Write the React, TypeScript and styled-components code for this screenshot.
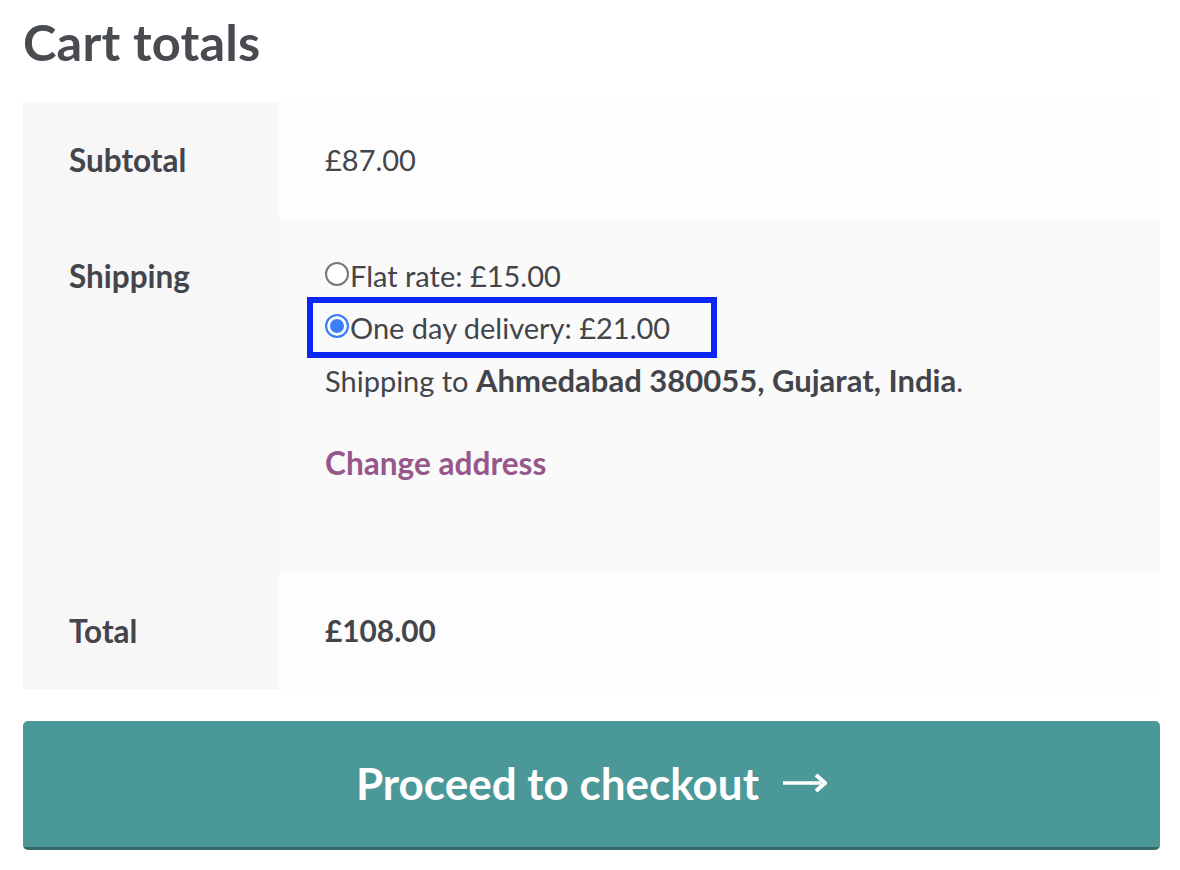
import React, { useState } from "react";
import styled, { createGlobalStyle } from "styled-components";

const Global = createGlobalStyle`
  html, body { margin: 0; padding: 0; background: #ffffff; }
  body {
    font-family: "Lato", "Source Sans Pro", "Noto Sans", sans-serif;
    color: #43454b;
    -webkit-font-smoothing: antialiased;
  }
  *, *::before, *::after { box-sizing: border-box; }
`;

const Page = styled.div`
  width: 1180px;
  padding: 0 20px 0 23px;
`;

const Heading = styled.h2`
  margin: 0;
  padding-top: 10px;
  height: 102px;
  font-size: 50.5px;
  line-height: 64px;
  font-weight: 700;
  color: #484b50;
  letter-spacing: 0.2px;
`;

const Table = styled.div`
  display: grid;
  grid-template-columns: 256px 1fr;
  width: 1137px;
`;

const Label = styled.div`
  background: #f7f7f7;
  padding: 32px 0 32px 46px;
  font-size: 31.5px;
  line-height: 52px;
  font-weight: 700;
  color: #43454b;
`;

const Value = styled.div<{ $alt?: boolean; $bold?: boolean }>`
  background: ${(p) => (p.$alt ? "#fafafa" : "#fdfdfd")};
  padding: 32px 46px;
  font-size: ${(p) => (p.$bold ? "29.8px" : "29px")};
  line-height: 52px;
  font-weight: ${(p) => (p.$bold ? 700 : 400)};
  color: #43454b;
`;

const Methods = styled.ul`
  list-style: none;
  margin: 0;
  padding: 0;
`;

const Method = styled.li<{ $highlight?: boolean }>`
  position: relative;
  display: flex;
  align-items: center;
  height: 52px;

  ${(p) =>
    p.$highlight &&
    `
    &::after {
      content: "";
      position: absolute;
      left: -18px;
      top: -5px;
      width: 410px;
      height: 61px;
      border: 6px solid #0a25f4;
      pointer-events: none;
    }
  `}
`;

const Radio = styled.input.attrs({ type: "radio" })`
  appearance: none;
  -webkit-appearance: none;
  margin: 0 1px 0 0;
  width: 24px;
  height: 24px;
  border-radius: 50%;
  border: 2px solid #767676;
  background: #ffffff;
  flex: none;
  position: relative;
  top: -2px;

  &:checked {
    border-color: #3b7ff5;
    box-shadow: inset 0 0 0 3px #ffffff;
    background: #3b7ff5;
  }
`;

const Destination = styled.p`
  margin: 0 0 30px;

  strong {
    font-size: 31px;
    font-weight: 700;
  }
`;

const ChangeLink = styled.a`
  display: block;
  margin-bottom: 52px;
  color: #96588a;
  font-size: 31.6px;
  font-weight: 700;
  text-decoration: none;
  cursor: pointer;
`;

const CheckoutButton = styled.button`
  display: flex;
  align-items: center;
  justify-content: center;
  gap: 24px;
  width: 1137px;
  height: 129px;
  margin-top: 32px;
  border: none;
  border-bottom: 3px solid #346b68;
  border-radius: 5px;
  background: #4b9898;
  color: #ffffff;
  font-family: inherit;
  font-size: 44px;
  font-weight: 700;
  cursor: pointer;
  padding: 0 0 2px;
`;

const Arrow = styled.svg`
  width: 44px;
  height: 26px;
  margin-top: 0;
`;

export default function App() {
  const [method, setMethod] = useState("one_day");
  return (
    <>
      <Global />
      <Page>
        <Heading>Cart totals</Heading>
        <Table>
          <Label>Subtotal</Label>
          <Value>£87.00</Value>

          <Label>Shipping</Label>
          <Value $alt>
            <Methods>
              <Method>
                <Radio
                  name="shipping"
                  checked={method === "flat"}
                  onChange={() => setMethod("flat")}
                />
                Flat rate: £15.00
              </Method>
              <Method $highlight>
                <Radio
                  name="shipping"
                  checked={method === "one_day"}
                  onChange={() => setMethod("one_day")}
                />
                One day delivery: £21.00
              </Method>
            </Methods>
            <Destination>
              Shipping to <strong>Ahmedabad 380055, Gujarat, India</strong>.
            </Destination>
            <ChangeLink>Change address</ChangeLink>
          </Value>

          <Label>Total</Label>
          <Value $bold>£108.00</Value>
        </Table>
        <CheckoutButton>
          Proceed to checkout
          <Arrow viewBox="0 0 44 26" fill="none">
            <path d="M0 13 H38" stroke="#ffffff" strokeWidth="3.5" />
            <path
              d="M33 5 L42 13 L33 21"
              stroke="#ffffff"
              strokeWidth="4"
              strokeLinejoin="miter"
              fill="none"
            />
          </Arrow>
        </CheckoutButton>
      </Page>
    </>
  );
}
